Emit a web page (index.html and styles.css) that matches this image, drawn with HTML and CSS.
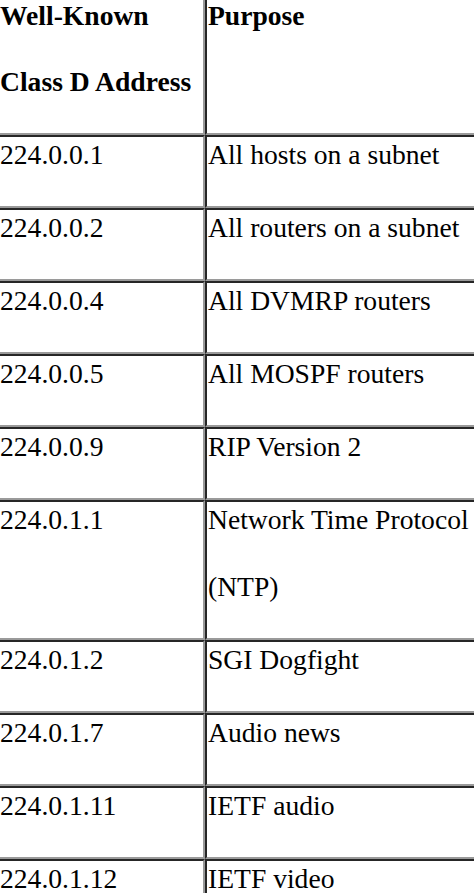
FILE: index.html
```html
<!DOCTYPE html>
<html>
<head>
<meta charset="utf-8">
<link rel="stylesheet" href="styles.css">
</head>
<body>
<table class="grid">
  <tr class="head">
    <th class="c1"><span class="ln">Well-Known</span><span class="ln">Class D Address</span></th>
    <th class="c2"><span class="ln">Purpose</span><span class="ln">&nbsp;</span></th>
  </tr>
  <tr><td class="c1"><span class="ln">224.0.0.1</span></td><td class="c2"><span class="ln">All hosts on a subnet</span></td></tr>
  <tr><td class="c1"><span class="ln">224.0.0.2</span></td><td class="c2"><span class="ln">All routers on a subnet</span></td></tr>
  <tr><td class="c1"><span class="ln">224.0.0.4</span></td><td class="c2"><span class="ln">All DVMRP routers</span></td></tr>
  <tr><td class="c1"><span class="ln">224.0.0.5</span></td><td class="c2"><span class="ln">All MOSPF routers</span></td></tr>
  <tr><td class="c1"><span class="ln">224.0.0.9</span></td><td class="c2"><span class="ln">RIP Version 2</span></td></tr>
  <tr><td class="c1"><span class="ln">224.0.1.1</span><span class="ln">&nbsp;</span></td><td class="c2"><span class="ln">Network Time Protocol</span><span class="ln">(NTP)</span></td></tr>
  <tr><td class="c1"><span class="ln">224.0.1.2</span></td><td class="c2"><span class="ln">SGI Dogfight</span></td></tr>
  <tr><td class="c1"><span class="ln">224.0.1.7</span></td><td class="c2"><span class="ln">Audio news</span></td></tr>
  <tr><td class="c1"><span class="ln">224.0.1.11</span></td><td class="c2"><span class="ln">IETF audio</span></td></tr>
  <tr><td class="c1"><span class="ln">224.0.1.12</span></td><td class="c2"><span class="ln">IETF video</span></td></tr>
</table>
</body>
</html>
```
FILE: styles.css
```css
html, body {
  margin: 0;
  padding: 0;
  background: #ffffff;
  overflow: hidden;
}
body {
  width: 474px;
  height: 893px;
  font-family: "Liberation Serif", "Times New Roman", serif;
  font-size: 27.6px;
  color: #000;
}
.grid {
  border-collapse: separate;
  border-spacing: 0;
  table-layout: fixed;
  width: 474px;
}
.grid td, .grid th {
  vertical-align: top;
  text-align: left;
  padding: 1px 0 1px 1px;
  border-top: 2px solid #262626;
  border-left: 2px solid #262626;
  border-bottom: 2px solid #9a9a9a;
  border-right: 2px solid #9a9a9a;
  white-space: nowrap;
  overflow: hidden;
}
.grid th {
  font-weight: bold;
  border-top: none;
  padding-top: 0;
}
.grid .c1 {
  width: 203px;
  border-left: none;
  padding-left: 0;
}
.grid .c2 {
  padding-left: 1px;
  border-right: none;
}
.ln {
  display: block;
  line-height: 34px;
  height: 67px;
}
.head .ln {
  height: 66px;
  line-height: 32px;
}
```
